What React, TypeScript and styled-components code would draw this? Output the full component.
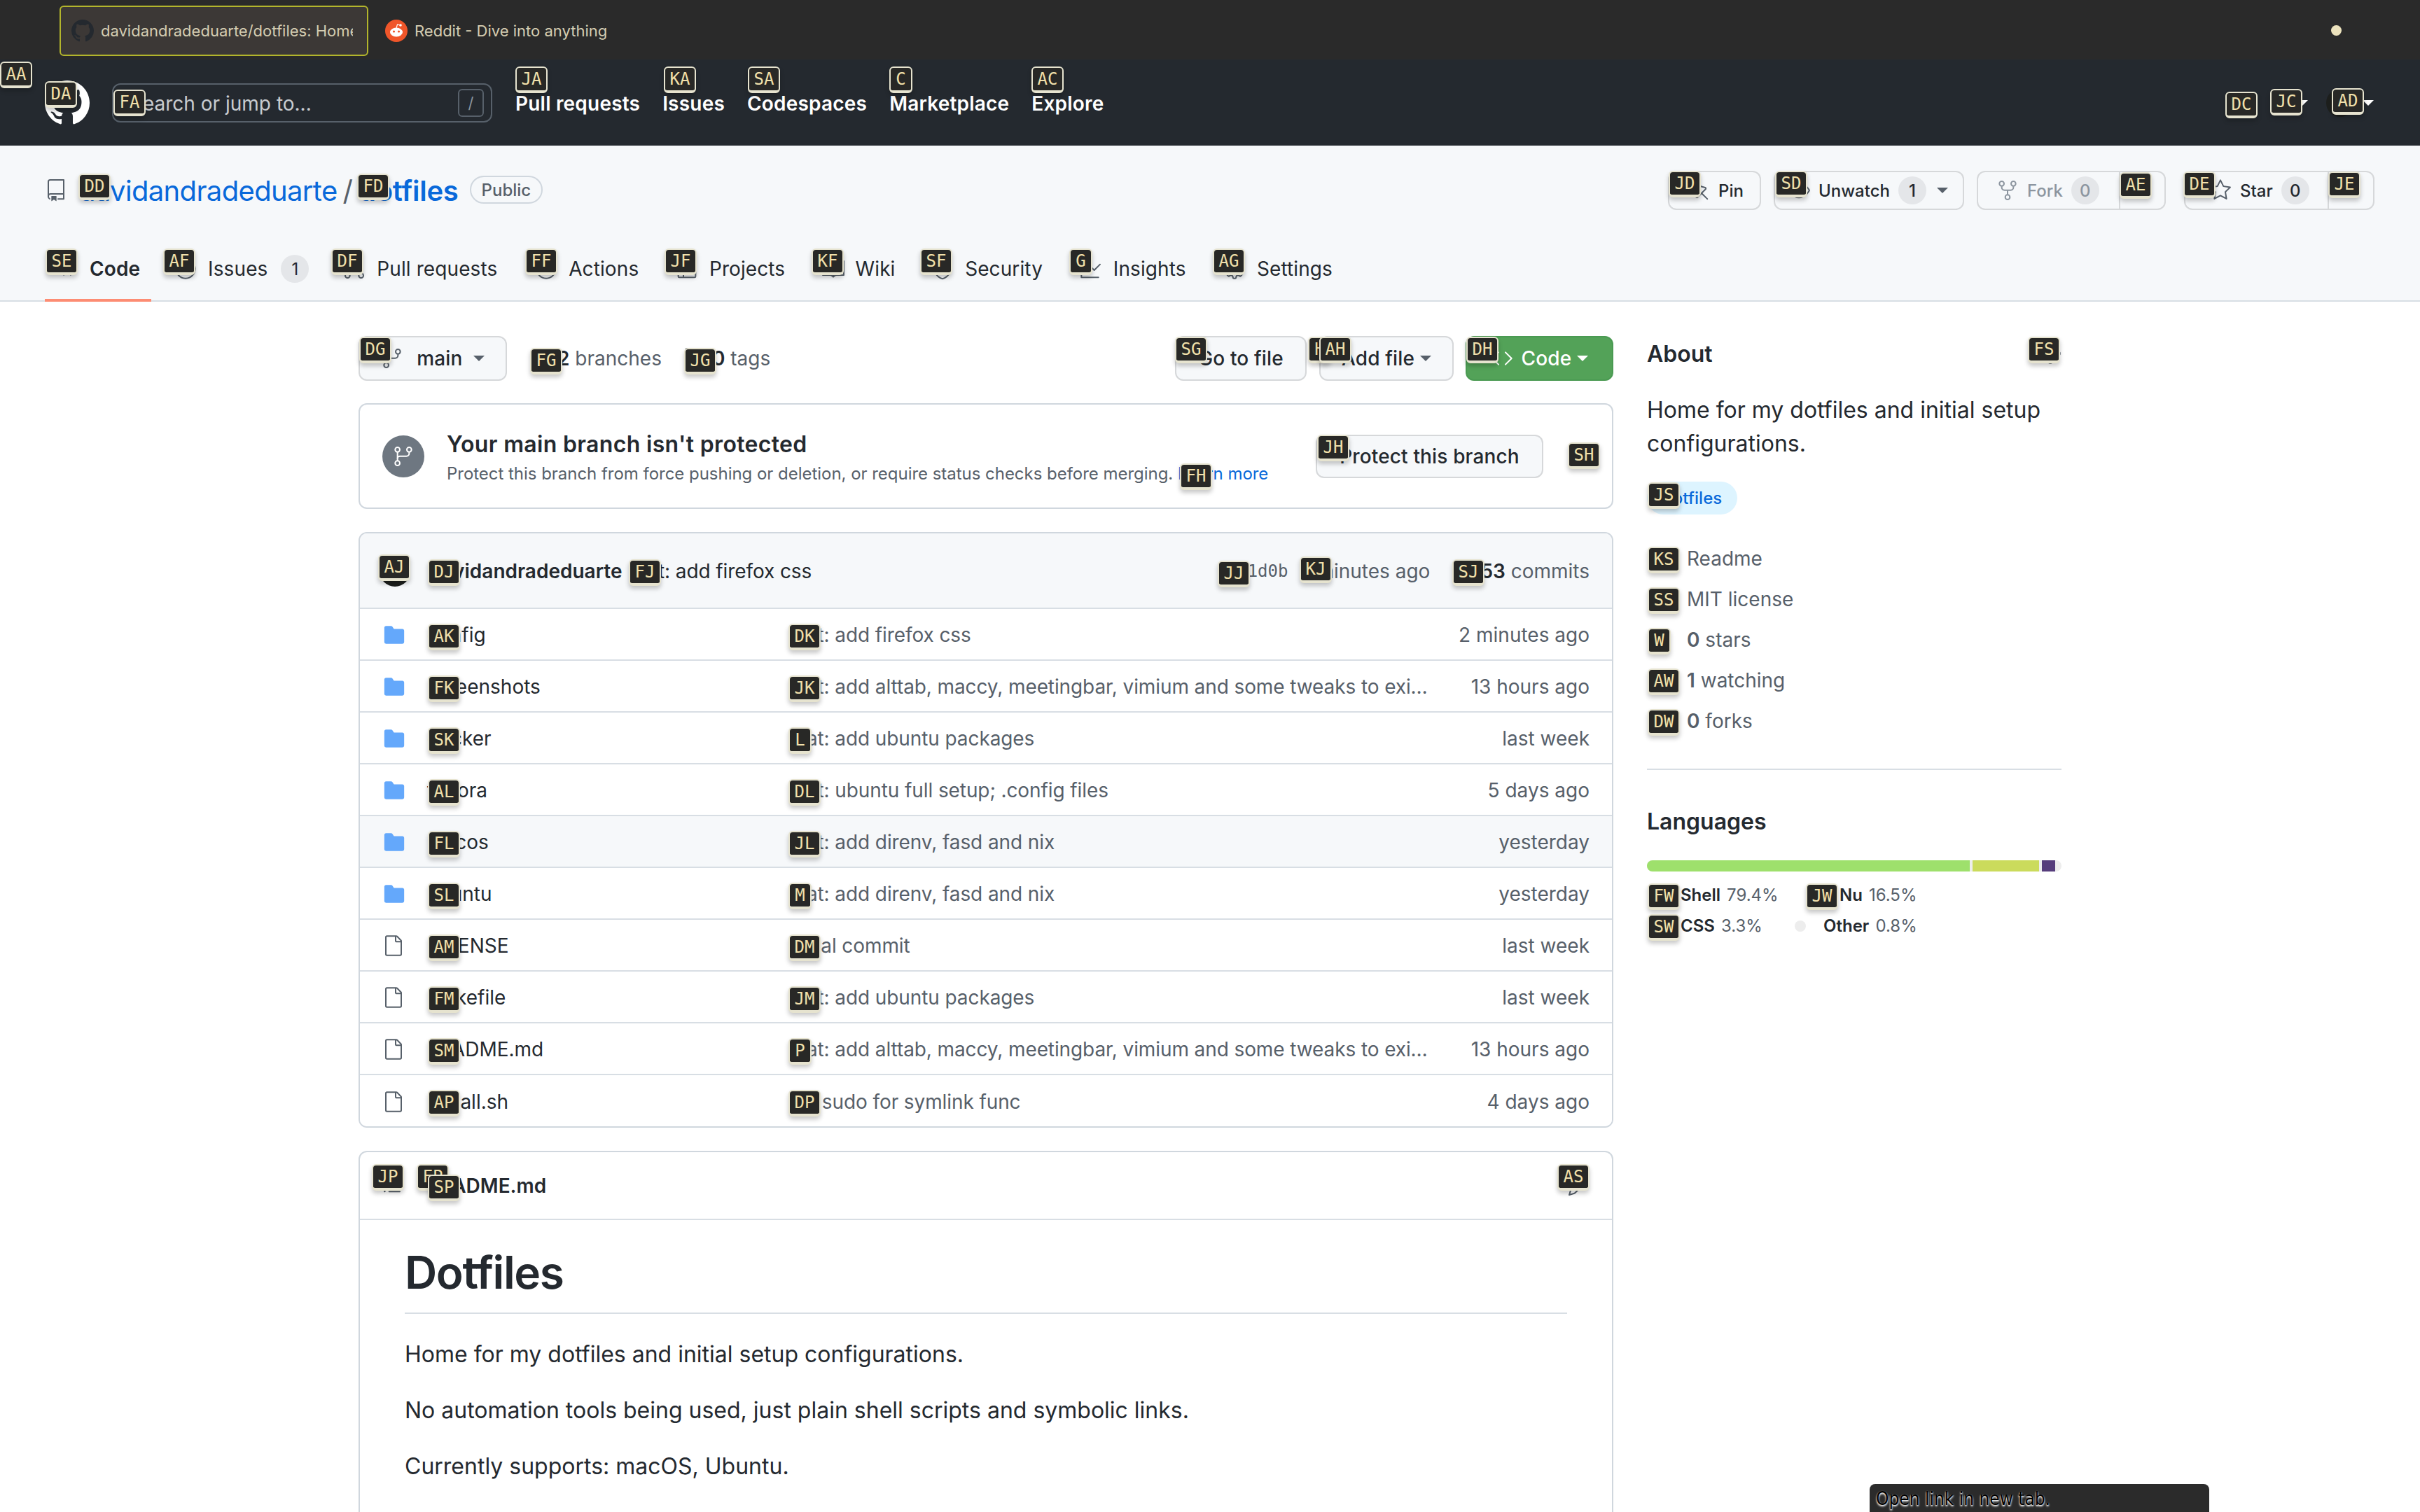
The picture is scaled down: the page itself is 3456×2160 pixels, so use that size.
import React from 'react';
import styled, { createGlobalStyle } from 'styled-components';
import {
  GoRepo, GoCode, GoIssueOpened, GoGitPullRequest, GoPlay, GoTable, GoBook, GoShieldLock,
  GoGraph, GoGear, GoGitBranch, GoTag, GoFileDirectoryFill, GoFile, GoPin, GoEye, GoRepoForked, GoStar,
  GoX, GoListUnordered, GoPencil, GoBell, GoPlus,
} from 'react-icons/go';

const Global = createGlobalStyle`
  html, body { margin: 0; padding: 0; background: #fff; }
  body { width: 3456px; height: 2160px; overflow: hidden; font-family: Inter, "Liberation Sans", sans-serif; color: #24292f; letter-spacing: 0; }
  * { box-sizing: border-box; }
`;

const GithubMark = ({ size, color }: { size: number; color: string }) => (
  <svg width={size} height={size} viewBox="0 0 16 16" fill={color} style={{ flex: 'none' }}>
    <path d="M8 0c4.42 0 8 3.58 8 8a8.013 8.013 0 0 1-5.45 7.59c-.4.08-.55-.17-.55-.38 0-.27.01-1.13.01-2.2 0-.75-.25-1.23-.54-1.48 1.78-.2 3.65-.88 3.65-3.95 0-.88-.31-1.59-.82-2.15.08-.2.36-1.02-.08-2.12 0 0-.67-.22-2.2.82-.64-.18-1.32-.27-2-.27-.68 0-1.36.09-2 .27-1.53-1.03-2.2-.82-2.2-.82-.44 1.1-.16 1.92-.08 2.12-.51.56-.82 1.28-.82 2.15 0 3.06 1.86 3.75 3.64 3.95-.23.2-.44.55-.51 1.07-.46.21-1.61.55-2.33-.66-.15-.24-.6-.83-1.23-.82-.67.01-.27.38.01.53.34.19.73.9.82 1.13.16.45.68 1.31 2.69.94 0 .67.01 1.3.01 1.49 0 .21-.15.45-.55.38A7.995 7.995 0 0 1 0 8c0-4.42 3.58-8 8-8Z" />
  </svg>
);

const Page = styled.div`position: relative; width: 3456px; height: 2160px; overflow: hidden;`;

const TabBar = styled.div`display: flex; align-items: center; height: 85px; padding: 8px 0 5px 85px; background: #2a2a2a; position: relative;`;
const BrowserTab = styled.div<{ $active?: boolean }>`
  display: flex; align-items: center; gap: 10px; height: 72px; overflow: hidden; white-space: nowrap;
  font-size: 22px; color: #d5cdb2; letter-spacing: 0;
  ${p => p.$active ? 'width: 441px; padding: 0 20px 0 15px; background: #3c3836; border: 2px solid #b3b52c; border-radius: 6px; margin-right: 24px;' : ''}
`;
const TabTitle = styled.span`overflow: hidden; flex: 1;`;
const RedditIcon = styled.svg`width: 32px; height: 32px; flex: none;`;
const StatusDot = styled.span`position: absolute; left: 3329px; top: 36px; width: 15px; height: 15px; border-radius: 50%; background: #ece2bd;`;

const Header = styled.header`display: flex; align-items: center; height: 123px; padding: 0 64px; background: #24292f; color: #fff;`;
const Logo = styled.span`display: flex; margin-right: 32px;`;
const Search = styled.div`
  display: flex; align-items: center; justify-content: space-between; width: 543px; height: 56px; padding: 0 10px 0 24px;
  border: 2px solid #57606a; border-radius: 12px; color: #c8ccd0; font-size: 28px; margin-right: 33px;
`;
const SearchText = styled.span`padding-top: 2px;`;
const SlashKey = styled.span`display: flex; align-items: center; justify-content: center; width: 37px; height: 40px; border: 2px solid #57606a; border-radius: 6px; color: #8b949e; font-size: 22px;`;
const Nav = styled.nav`display: flex; gap: 32px; padding-top: 3px; font-size: 28px; font-weight: 600; color: #fff; flex: 1; letter-spacing: .2px;`;
const HeaderRight = styled.div`display: flex; align-items: center; gap: 26px; color: #fff; font-size: 32px; padding-right: 2px;`;
const IconCaret = styled.span`display: inline-flex; align-items: center; gap: 4px;`;
const Caret = styled.span<{ $c?: string; $ml?: number }>`display: inline-block; flex: none; width: 0; height: 0; border: 8px solid transparent; border-top-color: ${p => p.$c || 'currentColor'}; border-bottom: 0; margin-left: ${p => p.$ml ?? 8}px; vertical-align: middle;`;
const Avatar = styled.span<{ $s: number }>`display: inline-block; width: ${p => p.$s}px; height: ${p => p.$s}px; border-radius: 50%; background: #1d1f1d; flex: none;`;

const RepoHead = styled.div`display: flex; flex-direction: column; justify-content: space-between; height: 223px; padding: 36px 64px 0; background: #f6f8fa; border-bottom: 2px solid #d8dee4;`;
const TitleRow = styled.div`display: flex; align-items: center; height: 56px;`;
const RepoIcon = styled.span`display: flex; font-size: 32px; color: #57606a; margin-right: 16px;`;
const RepoLink = styled.a<{ $b?: boolean }>`font-size: 40px; color: #0969da; font-weight: ${p => (p.$b ? 600 : 400)}; letter-spacing: ${p => (p.$b ? '-0.25px' : '-0.65px')};`;
const Slash = styled.span`font-size: 40px; color: #57606a; margin: 0 8px;`;
const Visibility = styled.span`margin: -2px 0 0 16px; height: 40px; padding: 0 15px; display: inline-flex; align-items: center; border: 2px solid #d0d7de; border-radius: 40px; font-size: 24px; font-weight: 500; color: #57606a;`;
const RepoActions = styled.div`display: flex; margin-left: auto; margin-right: 1px; align-items: center;`;
const Split = styled.div<{ $w: number; $faded?: boolean; $ml?: number }>`
  display: flex; align-items: center; width: ${p => p.$w}px; height: 56px; margin-left: ${p => p.$ml || 0}px; border: 2px solid rgba(31, 35, 40, .15); border-radius: 12px; background: #f6f8fa;
  font-size: 24px; font-weight: 500; color: ${p => (p.$faded ? '#8c959f' : '#24292f')};
`;
const SplitMain = styled.div<{ $pl: number; $div?: boolean; $w?: number }>`
  display: flex; align-items: center; gap: 12px; padding-left: ${p => p.$pl}px; height: 100%;
  ${p => (p.$w ? `width: ${p.$w}px;` : '')} ${p => (p.$div ? 'border-right: 2px solid rgba(31,35,40,.15);' : '')}
`;
const BtnIcon = styled.span<{ $c?: string }>`display: flex; font-size: 32px; color: ${p => p.$c || '#57606a'};`;
const Counter = styled.span<{ $c?: string }>`display: inline-flex; justify-content: center; align-items: center; min-width: 40px; height: 40px; border-radius: 40px; background: #e4e6e9; font-size: 24px; color: ${p => p.$c || '#24292f'};`;

const Tabs = styled.div`display: flex; gap: 17px; height: 90px; align-items: stretch;`;
const TabItem = styled.div<{ $on?: boolean }>`
  position: relative; display: flex; align-items: center; gap: 16px; padding: 0 16px; font-size: 28px; color: #24292f; letter-spacing: .1px;
  ${p => p.$on ? `&::after { content: ''; position: absolute; left: 0; right: 0; bottom: -2px; height: 4px; background: #fd8c73; }` : ''}
`;
const TabIcon = styled.span`display: flex; font-size: 32px; color: #57606a;`;
const TabLabel = styled.span<{ $on?: boolean }>`
  display: inline-block; font-weight: ${p => (p.$on ? 600 : 400)};
  &::before { content: attr(data-content); display: block; height: 0; overflow: hidden; visibility: hidden; font-weight: 600; }
`;

const Content = styled.div`display: flex; gap: 48px; padding: 49px 0 0 512px;`;
const MainCol = styled.main`width: 1792px; display: flex; flex-direction: column;`;
const Toolbar = styled.div`display: flex; align-items: center; height: 64px; margin-bottom: 32px;`;
const Btn = styled.div<{ $w: number; $primary?: boolean; $h?: number; $ml?: number }>`
  display: flex; align-items: center; justify-content: center; gap: 12px; width: ${p => p.$w}px; height: ${p => p.$h || 64}px; margin-left: ${p => p.$ml || 0}px;
  border-radius: 12px; font-size: 28px; font-weight: 500; flex: none; letter-spacing: .15px;
  border: 2px solid ${p => (p.$primary ? '#4a9a52' : 'rgba(31,35,40,.15)')};
  background: ${p => (p.$primary ? '#53a258' : '#f6f8fa')}; color: ${p => (p.$primary ? '#fff' : '#24292f')};
`;
const CountLink = styled.span`display: flex; align-items: center; gap: 8px; margin-left: 32px; font-size: 28px; color: #57606a;`;
const Strong = styled.b<{ $c?: string }>`font-weight: 600; color: ${p => p.$c || '#24292f'};`;
const Spacer = styled.span`flex: 1;`;

const Notice = styled.section`display: flex; align-items: center; height: 151px; padding: 0 26px 0 32px; margin-bottom: 33px; border: 2px solid #d0d7de; border-radius: 12px;`;
const NoticeIcon = styled.span`display: flex; align-items: center; justify-content: center; flex: none; width: 60px; height: 60px; border-radius: 50%; background: #6e7781; color: #fff; font-size: 32px; margin-right: 32px;`;
const NoticeText = styled.div`flex: 1; padding-top: 7px;`;
const NoticeTitle = styled.div`font-size: 32px; font-weight: 600; line-height: 44px; letter-spacing: .33px;`;
const NoticeSub = styled.div`font-size: 24px; color: #57606a; line-height: 40px; letter-spacing: -0.03px;`;
const Link = styled.span`color: #0969da;`;
const Dismiss = styled.span`display: flex; font-size: 32px; color: #57606a; margin-left: 40px;`;

const Box = styled.section`border: 2px solid #d0d7de; border-radius: 12px; overflow: hidden;`;
const CommitHead = styled.div`display: flex; align-items: center; height: 108px; padding: 2px 32px 0 28px; background: #f6f8fa; border-bottom: 2px solid #d8dee4; font-size: 28px;`;
const Author = styled.b`font-weight: 600; margin: 0 10px 0 28px;`;
const CommitMsg = styled.span`letter-spacing: -0.1px;`;
const Muted = styled.span<{ $mr?: number }>`color: #57606a; margin-right: ${p => p.$mr || 0}px;`;
const Hash = styled.span`font-family: "DejaVu Sans Mono", monospace; font-size: 24px; color: #57606a; margin-right: 16px; margin-left: auto;`;
const Row = styled.div<{ $hover?: boolean }>`
  display: flex; align-items: center; height: 74px; padding: 2px 32px 0; font-size: 28px; background: ${p => (p.$hover ? '#f6f8fa' : '#fff')};
  border-bottom: 2px solid #d8dee4; &:last-child { border-bottom: 0; height: 73px; }
`;
const RowIcon = styled.span<{ $dir?: boolean }>`display: flex; width: 64px; font-size: ${p => (p.$dir ? 34 : 32)}px; color: ${p => (p.$dir ? '#64a8fb' : '#57606a')};`;
const RowName = styled.span`width: 516px; flex: none;`;
const RowMsg = styled.span`width: 914px; flex: none; color: #57606a; white-space: nowrap; overflow: hidden; text-overflow: ellipsis; letter-spacing: -0.1px;`;
const RowTime = styled.span`margin-left: auto; color: #57606a;`;

const Readme = styled(Box)`margin-top: 33px; height: 600px;`;
const ReadmeHead = styled.div`display: flex; align-items: center; height: 97px; padding: 0 32px 0 30px; border-bottom: 2px solid #d8dee4; font-size: 28px; font-weight: 600;`;
const ReadmeName = styled.span`margin-left: 34px;`;
const ReadmeBody = styled.div`padding: 35px 64px 0;`;
const H1 = styled.h1`margin: 0 0 34px; padding-bottom: 17px; font-size: 64px; line-height: 80px; font-weight: 600; border-bottom: 2px solid #d8dee4; letter-spacing: -1.4px;`;
const P = styled.p`margin: 0 0 32px; font-size: 32px; line-height: 48px; letter-spacing: 0;`;

const Side = styled.aside`width: 592px; font-size: 28px;`;
const AboutHead = styled.div`display: flex; justify-content: space-between; align-items: center; height: 50px; font-size: 32px; font-weight: 600; margin-bottom: 32px;`;
const Desc = styled.p`margin: 0 0 30px; font-size: 32px; line-height: 48px; letter-spacing: 0;`;
const Topic = styled.span`display: inline-flex; align-items: center; height: 47px; padding: 0 22px; border-radius: 40px; background: #ddf4ff; color: #0969da; font-size: 24px; font-weight: 500; letter-spacing: 0;`;
const Facts = styled.div`margin-top: 34px; display: flex; flex-direction: column;`;
const Fact = styled.div`display: flex; align-items: center; height: 58px; padding-left: 57px; color: #57606a;`;
const Divider = styled.hr`border: 0; border-top: 2px solid #d8dee4; margin: 39px 0 0;`;
const LangTitle = styled.div`font-size: 32px; font-weight: 600; margin-top: 52px; line-height: 44px;`;
const Bar = styled.div`display: flex; gap: 4px; height: 16px; margin-top: 33px; border-radius: 8px; overflow: hidden; background: #ededed;`;
const Seg = styled.span<{ $w: number; $c: string }>`width: ${p => p.$w}px; background: ${p => p.$c};`;
const LangGrid = styled.div`display: grid; grid-template-columns: 227px 1fr; margin-top: 11px; font-size: 24px; row-gap: 0; letter-spacing: 0;`;
const Lang = styled.div<{ $pl: number }>`display: flex; align-items: center; gap: 9px; height: 44px; padding-left: ${p => p.$pl}px; color: #57606a;`;
const LangDot = styled.span`position: absolute; left: 2563px; top: 1315px; width: 16px; height: 16px; border-radius: 50%; background: #ededed;`;

const Toast = styled.div`
  position: absolute; left: 2670px; top: 2120px; width: 485px; height: 60px; padding: 6px 9px; background: #2b2b2b; border-radius: 8px 8px 0 0;
  color: #000; font: 26px "DejaVu Sans Condensed", "Liberation Sans", sans-serif; text-shadow: 0 1px 2px #fff, 0 2px 3px rgba(255, 255, 255, .8); letter-spacing: 0;
`;

const HintMark = styled.span<{ $x: number; $y: number; $w: number }>`
  position: absolute; left: ${p => p.$x}px; top: ${p => p.$y}px; width: ${p => p.$w}px; height: 38px; display: flex; align-items: center; justify-content: center;
  background: #282826; border: 2px solid #e6e3cf; border-bottom-width: 4px; border-radius: 6px; box-shadow: 0 4px 6px rgba(0,0,0,.22);
  color: #f1e0ab; font: 24px "DejaVu Sans Mono", monospace; letter-spacing: 0; line-height: 1;
`;

type H = [string, number, number];
const rowsY = (i: number) => 891 + 74 * i;
const hints: H[] = [
  ['AA', 0, 88], ['DA', 64, 116], ['FA', 162, 128], ['JA', 736, 95], ['KA', 948, 95], ['SA', 1068, 95], ['C', 1270, 95], ['AC', 1473, 95],
  ['DC', 3178, 131], ['JC', 3242, 127], ['AD', 3330, 126], ['DD', 112, 248], ['FD', 510, 248], ['JD', 2383, 244], ['SD', 2535, 244], ['AE', 3027, 246], ['DE', 3118, 245], ['JE', 3325, 245],
  ['SE', 65, 355], ['AF', 233, 355], ['DF', 473, 355], ['FF', 750, 355], ['JF', 949, 355], ['KF', 1159, 355], ['SF', 1314, 355], ['G', 1527, 355], ['AG', 1732, 355],
  ['DG', 513, 481], ['FG', 757, 497], ['JG', 977, 497], ['SG', 1678, 481], ['H', 1868, 481], ['AH', 1884, 481], ['DH', 2094, 481],
  ['FH', 1685, 662], ['JH', 1881, 621], ['SH', 2239, 632], ['AJ', 540, 792], ['DJ', 611, 799], ['FJ', 898, 799], ['JJ', 1739, 801], ['KJ', 1856, 795], ['SJ', 2074, 799],
  ['AK', 611, rowsY(0)], ['FK', 611, rowsY(1)], ['SK', 611, rowsY(2)], ['AL', 611, rowsY(3)], ['FL', 611, rowsY(4)], ['SL', 611, rowsY(5)], ['AM', 611, rowsY(6)], ['FM', 611, rowsY(7)], ['SM', 611, rowsY(8)], ['AP', 611, rowsY(9)],
  ['DK', 1126, rowsY(0)], ['JK', 1126, rowsY(1)], ['L', 1126, rowsY(2)], ['DL', 1126, rowsY(3)], ['JL', 1126, rowsY(4)], ['M', 1126, rowsY(5)], ['DM', 1126, rowsY(6)], ['JM', 1126, rowsY(7)], ['P', 1126, rowsY(8)], ['DP', 1126, rowsY(9)],
  ['JP', 531, 1663], ['FP', 595, 1663], ['SP', 611, 1678], ['AS', 2224, 1663],
  ['FS', 2896, 481], ['JS', 2353, 689], ['KS', 2353, 781], ['SS', 2353, 839], ['W', 2353, 897], ['AW', 2353, 955], ['DW', 2353, 1013], ['FW', 2353, 1262], ['JW', 2579, 1262], ['SW', 2353, 1306],
];

const longMsg = 'feat: add alttab, maccy, meetingbar, vimium and some tweaks to existing configs';
const files: [string, boolean, string, string][] = [
  ['config', true, 'feat: add firefox css', '2 minutes ago'],
  ['screenshots', true, longMsg, '13 hours ago'],
  ['docker', true, 'feat: add ubuntu packages', 'last week'],
  ['fedora', true, 'feat: ubuntu full setup; .config files', '5 days ago'],
  ['macos', true, 'feat: add direnv, fasd and nix', 'yesterday'],
  ['ubuntu', true, 'feat: add direnv, fasd and nix', 'yesterday'],
  ['LICENSE', false, 'Initial commit', 'last week'],
  ['Makefile', false, 'feat: add ubuntu packages', 'last week'],
  ['README.md', false, longMsg, '13 hours ago'],
  ['install.sh', false, 'fix: sudo for symlink func', '4 days ago'],
];

const tabs: [string, React.ReactNode][] = [
  ['Code', <GoCode />], ['Issues', <GoIssueOpened />], ['Pull requests', <GoGitPullRequest />], ['Actions', <GoPlay />], ['Projects', <GoTable />],
  ['Wiki', <GoBook />], ['Security', <GoShieldLock />], ['Insights', <GoGraph />], ['Settings', <GoGear />],
];

export default function App() {
  return (
    <Page>
      <Global />
      <TabBar>
        <BrowserTab $active>
          <GithubMark size={32} color="#24292f" />
          <TabTitle>davidandradeduarte/dotfiles: Home for my dotfiles</TabTitle>
        </BrowserTab>
        <BrowserTab>
          <RedditIcon viewBox="0 0 32 32">
            <circle cx="16" cy="16" r="16" fill="#f0562a" />
            <ellipse cx="16" cy="18" rx="9" ry="6.5" fill="#fff" />
            <circle cx="12.5" cy="17" r="1.6" fill="#f0562a" />
            <circle cx="19.5" cy="17" r="1.6" fill="#f0562a" />
            <circle cx="22" cy="8" r="1.8" fill="#fff" />
            <path d="M16 12l1.5-5 4 1" stroke="#fff" strokeWidth="1.2" fill="none" />
          </RedditIcon>
          <span>Reddit - Dive into anything</span>
        </BrowserTab>
        <StatusDot />
      </TabBar>

      <Header>
        <Logo><GithubMark size={64} color="#fff" /></Logo>
        <Search><SearchText>Search or jump to...</SearchText><SlashKey>/</SlashKey></Search>
        <Nav>
          <span>Pull requests</span><span>Issues</span><span>Codespaces</span><span>Marketplace</span><span>Explore</span>
        </Nav>
        <HeaderRight>
          <GoBell />
          <IconCaret><GoPlus /><Caret /></IconCaret>
          <IconCaret><Avatar $s={40} /><Caret /></IconCaret>
        </HeaderRight>
      </Header>

      <RepoHead>
        <TitleRow>
          <RepoIcon><GoRepo /></RepoIcon>
          <RepoLink>davidandradeduarte</RepoLink>
          <Slash>/</Slash>
          <RepoLink $b>dotfiles</RepoLink>
          <Visibility>Public</Visibility>
          <RepoActions>
            <Split $w={133}><SplitMain $pl={26}><BtnIcon><GoPin /></BtnIcon><span>Pin</span></SplitMain></Split>
            <Split $w={272} $ml={18}>
              <SplitMain $pl={18}><BtnIcon><GoEye /></BtnIcon><span>Unwatch</span><Counter>1</Counter><Caret $c="#57606a" $ml={3} /></SplitMain>
            </Split>
            <Split $w={270} $ml={18} $faded>
              <SplitMain $pl={26} $w={203} $div><BtnIcon $c="#8c959f"><GoRepoForked /></BtnIcon><span>Fork</span><Counter $c="#8c959f">0</Counter></SplitMain>
            </Split>
            <Split $w={272} $ml={26}>
              <SplitMain $pl={34} $w={205} $div><BtnIcon><GoStar /></BtnIcon><span>Star</span><Counter>0</Counter></SplitMain>
            </Split>
          </RepoActions>
        </TitleRow>
        <Tabs>
          {tabs.map(([name, icon], i) => (
            <TabItem key={name} $on={i === 0}>
              <TabIcon>{icon}</TabIcon>
              <TabLabel $on={i === 0} data-content={name}>{name}</TabLabel>
              {name === 'Issues' && <Counter>1</Counter>}
            </TabItem>
          ))}
        </Tabs>
      </RepoHead>

      <Content>
        <MainCol>
          <Toolbar>
            <Btn $w={212}><BtnIcon><GoGitBranch /></BtnIcon>&nbsp;main<Caret $c="#57606a" $ml={4} /></Btn>
            <CountLink><BtnIcon><GoGitBranch /></BtnIcon><span><Strong>2</Strong> branches</span></CountLink>
            <CountLink><BtnIcon><GoTag /></BtnIcon><span><Strong>0</Strong> tags</span></CountLink>
            <Spacer />
            <Btn $w={188}>Go to file</Btn>
            <Btn $w={192} $ml={18}>Add file<Caret $c="#57606a" $ml={-4} /></Btn>
            <Btn $w={211} $ml={17} $primary><BtnIcon $c="#fff"><GoCode /></BtnIcon>Code<Caret $ml={-4} /></Btn>
          </Toolbar>

          <Notice>
            <NoticeIcon><GoGitBranch /></NoticeIcon>
            <NoticeText>
              <NoticeTitle>Your main branch isn't protected</NoticeTitle>
              <NoticeSub>Protect this branch from force pushing or deletion, or require status checks before merging. <Link>Learn more</Link></NoticeSub>
            </NoticeText>
            <Btn $w={325} $h={62}>Protect this branch</Btn>
            <Dismiss><GoX /></Dismiss>
          </Notice>

          <Box>
            <CommitHead>
              <Avatar $s={44} />
              <Author>davidandradeduarte</Author>
              <CommitMsg>feat: add firefox css</CommitMsg>
              <Hash>f3a1d0b</Hash>
              <Muted $mr={72}>2 minutes ago</Muted>
              <Muted><Strong>53</Strong> commits</Muted>
            </CommitHead>
            {files.map(([name, dir, msg, time]) => (
              <Row key={name} $hover={name === 'macos'}>
                <RowIcon $dir={dir}>{dir ? <GoFileDirectoryFill /> : <GoFile />}</RowIcon>
                <RowName>{name}</RowName>
                <RowMsg>{msg}</RowMsg>
                <RowTime>{time}</RowTime>
              </Row>
            ))}
          </Box>

          <Readme>
            <ReadmeHead>
              <BtnIcon><GoListUnordered /></BtnIcon>
              <ReadmeName>README.md</ReadmeName>
              <Spacer />
              <BtnIcon><GoPencil /></BtnIcon>
            </ReadmeHead>
            <ReadmeBody>
              <H1>Dotfiles</H1>
              <P>Home for my dotfiles and initial setup configurations.</P>
              <P>No automation tools being used, just plain shell scripts and symbolic links.</P>
              <P>Currently supports: macOS, Ubuntu.</P>
            </ReadmeBody>
          </Readme>
        </MainCol>

        <Side>
          <AboutHead>About<BtnIcon><GoGear /></BtnIcon></AboutHead>
          <Desc>Home for my dotfiles and initial setup configurations.</Desc>
          <Topic>dotfiles</Topic>
          <Facts>
            <Fact>Readme</Fact>
            <Fact>MIT license</Fact>
            <Fact><Strong $c="#57606a">0</Strong>&nbsp;stars</Fact>
            <Fact><Strong $c="#57606a">1</Strong>&nbsp;watching</Fact>
            <Fact><Strong $c="#57606a">0</Strong>&nbsp;forks</Fact>
          </Facts>
          <Divider />
          <LangTitle>Languages</LangTitle>
          <Bar>
            <Seg $w={461} $c="#9ee06c" />
            <Seg $w={95} $c="#cbdb5c" />
            <Seg $w={19} $c="#563d7c" />
          </Bar>
          <LangGrid>
            <Lang $pl={48}><Strong>Shell</Strong> 79.4%</Lang>
            <Lang $pl={48}><Strong>Nu</Strong> 16.5%</Lang>
            <Lang $pl={48}><Strong>CSS</Strong> 3.3%</Lang>
            <Lang $pl={25}><Strong>Other</Strong> 0.8%</Lang>
          </LangGrid>
        </Side>
      </Content>

      <LangDot />
      <Toast>Open link in new tab.</Toast>
      {hints.map(([t, x, y]) => (
        <HintMark key={t} $x={x} $y={y} $w={t.length === 1 ? 33 : 46}>{t}</HintMark>
      ))}
    </Page>
  );
}
